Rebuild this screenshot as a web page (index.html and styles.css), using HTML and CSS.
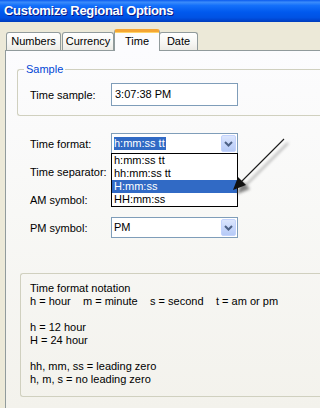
FILE: index.html
```html
<!DOCTYPE html>
<html>
<head>
<meta charset="utf-8">
<title>Customize Regional Options</title>
<link rel="stylesheet" href="styles.css">
</head>
<body>
<div class="titlebar">Customize Regional Options</div>
<div class="window">
  <div class="tabs">
    <div class="tab t-numbers">Numbers</div>
    <div class="tab t-currency">Currency</div>
    <div class="tab t-time active">Time</div>
    <div class="tab t-date">Date</div>
  </div>
  <div class="panel">
    <fieldset class="sample">
      <legend>Sample</legend>
      <div class="row">
        <span class="label">Time sample:</span>
        <div class="textbox">3:07:38 PM</div>
      </div>
    </fieldset>
    <div class="fields">
      <div class="row">
        <span class="label">Time format:</span>
        <div class="combo">
          <span class="value"><span class="sel">h:mm:ss tt</span></span>
          <span class="btn"><svg width="15" height="17" viewBox="0 0 15 17"><path d="M4 7 L7.5 10.5 L11 7" fill="none" stroke="#4D6185" stroke-width="2"/></svg></span>
          <ul class="list">
            <li>h:mm:ss tt</li>
            <li>hh:mm:ss tt</li>
            <li class="hl">H:mm:ss</li>
            <li>HH:mm:ss</li>
          </ul>
        </div>
      </div>
      <div class="row"><span class="label">Time separator:</span></div>
      <div class="row"><span class="label">AM symbol:</span></div>
      <div class="row">
        <span class="label">PM symbol:</span>
        <div class="combo">
          <span class="value">PM</span>
          <span class="btn"><svg width="15" height="17" viewBox="0 0 15 17"><path d="M4 7 L7.5 10.5 L11 7" fill="none" stroke="#4D6185" stroke-width="2"/></svg></span>
        </div>
      </div>
    </div>
    <div class="notation">
      <div>Time format notation</div>
      <div class="cols"><span>h = hour</span><span>m = minute</span><span>s = second</span><span>t = am or pm</span></div>
      <div class="gap">h = 12 hour</div>
      <div>H = 24 hour</div>
      <div class="gap">hh, mm, ss = leading zero</div>
      <div>h, m, s = no leading zero</div>
    </div>
  </div>
</div>
<svg class="arrow" width="291" height="408" viewBox="0 0 291 408">
  <defs>
    <filter id="blur" x="-20%" y="-20%" width="140%" height="140%"><feGaussianBlur stdDeviation="1.6"/></filter>
  </defs>
  <g filter="url(#blur)" opacity="0.75" transform="translate(4,4)">
    <line x1="284" y1="139" x2="240" y2="183" stroke="#777" stroke-width="1.5"/>
    <polygon points="233,190 238,177 246,185" fill="#555"/>
  </g>
  <line x1="284" y1="139" x2="240" y2="183" stroke="#1a1a1a" stroke-width="1.1"/>
  <polygon points="233,190 238,177 246,185" fill="#111"/>
</svg>
</body>
</html>
```
FILE: styles.css
```css
html, body {
  margin: 0;
  padding: 0;
  overflow: hidden;
}
body {
  height: 100vh;
  min-height: 408px;
  position: relative;
  display: flex;
  flex-direction: column;
  background: #ECE9D8;
  font-family: "Liberation Sans", Arial, sans-serif;
  font-size: 11px;
  color: #000;
}
.titlebar {
  flex: none;
  height: 22px;
  box-sizing: border-box;
  padding-left: 4px;
  line-height: 21px;
  color: #fff;
  font-weight: bold;
  font-size: 13px;
  letter-spacing: -0.3px;
  white-space: nowrap;
  text-shadow: 1px 1px #0A1883;
  background: linear-gradient(to bottom, #0A5AEE 0%, #3B8CFB 10%, #1470FA 25%, #0059EE 55%, #0052E4 80%, #0046D2 90%, #003DBB 100%);
}
.window {
  flex: 1;
  display: flex;
  flex-direction: column;
  padding: 7px 0 0 5px;
}
.tabs {
  flex: none;
  display: flex;
  align-items: flex-end;
  height: 21px;
  padding-left: 1px;
  position: relative;
  z-index: 1;
}
.tab {
  box-sizing: border-box;
  height: 18px;
  line-height: 17px;
  text-align: center;
  border: 1px solid #919B9C;
  border-bottom: none;
  border-radius: 3px 3px 0 0;
  background: linear-gradient(to bottom, #FFFFFF 0%, #F6F6F3 60%, #ECEBE5 100%);
  white-space: nowrap;
}
.t-numbers { width: 55px; margin-right: 1px; }
.t-currency { width: 52px; }
.t-time { width: 46px; }
.t-date { width: 39px; margin-left: -1px; }
.tab.active {
  height: 22px;
  margin-bottom: -1px;
  line-height: 18px;
  border-top: 3px solid #F5A633;
  box-shadow: inset 0 1px 0 #FFD46A;
  background: #FCFCFE;
  position: relative;
  z-index: 2;
}
.panel {
  flex: 1;
  border-left: 1px solid #919B9C;
  border-top: 1px solid #919B9C;
  background: linear-gradient(to bottom, #FCFCFE 0%, #F8F8F6 45%, #F3F2EC 100%);
}
.sample {
  margin: 12px 0 0 11px;
  padding: 7px 0 9px 12px;
  border: 1px solid #D0D0BF;
  border-right: none;
  border-radius: 3px 0 0 3px;
  min-width: 0;
}
.sample legend {
  color: #0046D5;
  line-height: 13px;
  padding: 0 2px;
  margin-left: -6px;
}
.row {
  display: flex;
  align-items: center;
  height: 21px;
}
.sample .row {
  height: 23px;
}
.label {
  width: 81px;
  flex: none;
  white-space: nowrap;
}
.textbox {
  box-sizing: border-box;
  width: 127px;
  height: 23px;
  border: 1px solid #7F9DB9;
  background: #fff;
  padding-left: 3px;
  line-height: 21px;
}
.fields {
  margin: 17px 0 0 24px;
  display: flex;
  flex-direction: column;
  gap: 7px;
}
.combo {
  position: relative;
  box-sizing: border-box;
  width: 127px;
  height: 21px;
  border: 1px solid #7F9DB9;
  background: #fff;
  display: flex;
  align-items: center;
}
.value {
  flex: 1;
  padding-left: 2px;
  line-height: 13px;
  white-space: nowrap;
}
.sel {
  background: #316AC5;
  color: #fff;
  padding: 0 1px 0 0;
  display: inline-block;
  line-height: 13px;
}
.btn {
  box-sizing: border-box;
  width: 15px;
  height: 17px;
  margin-right: 1px;
  border: 1px solid #C3D3FD;
  border-radius: 2px;
  background: linear-gradient(to bottom, #DCE6FD 0%, #C7D7FB 50%, #B6CAF6 100%);
  display: flex;
  align-items: center;
  justify-content: center;
  overflow: hidden;
}
.btn svg {
  display: block;
  flex: none;
}
.list {
  position: absolute;
  left: -1px;
  top: 100%;
  box-sizing: border-box;
  width: 127px;
  margin: 0;
  padding: 0;
  list-style: none;
  border: 1px solid #000;
  background: #fff;
  z-index: 3;
}
.list li {
  height: 13px;
  line-height: 13px;
  padding-left: 2px;
  white-space: nowrap;
}
.list li.hl {
  background: #316AC5;
  color: #fff;
}
.notation {
  margin: 35px 0 0 14px;
  padding: 8px 0 10px 9px;
  border: 1px solid #D0D0BF;
  border-right: none;
  border-radius: 3px 0 0 3px;
  line-height: 13px;
  white-space: nowrap;
}
.notation .gap {
  margin-top: 13px;
}
.cols {
  display: grid;
  grid-template-columns: 53px 67px 66px auto;
}
.arrow {
  position: absolute;
  left: 0;
  top: 0;
  pointer-events: none;
  z-index: 10;
}
```
